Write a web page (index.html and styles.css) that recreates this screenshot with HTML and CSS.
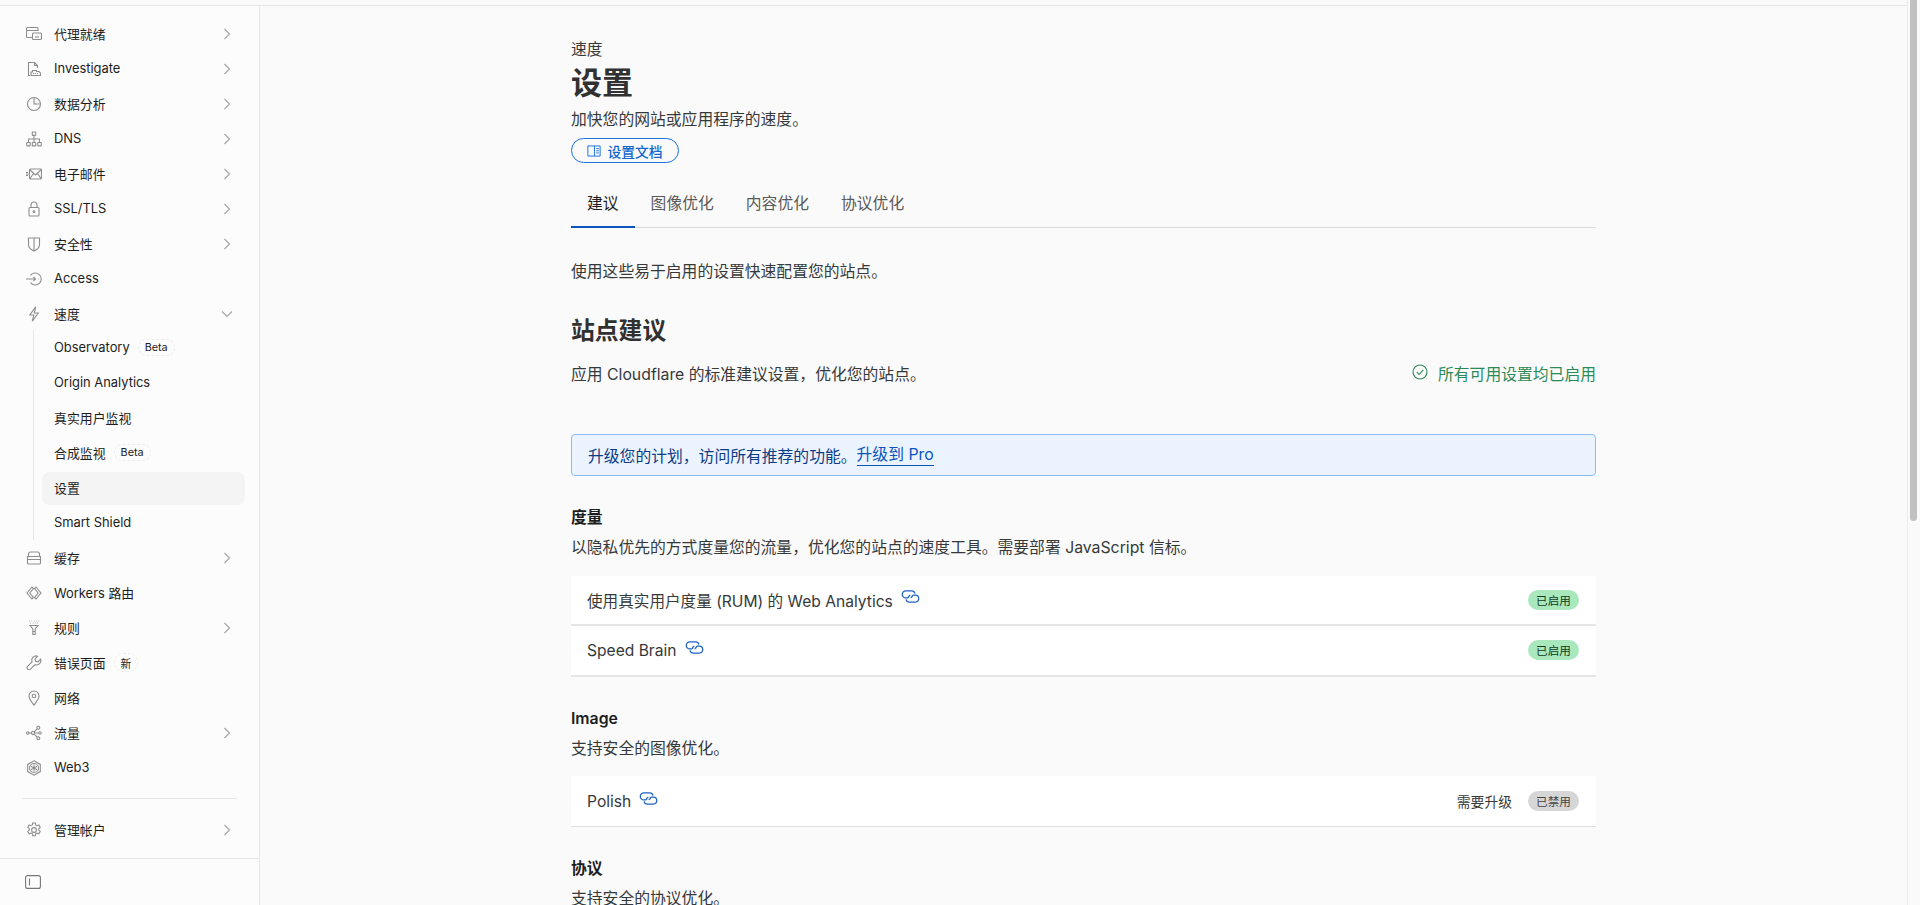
FILE: index.html
```html
<!DOCTYPE html>
<html lang="zh-CN">
<head>
<meta charset="utf-8">
<title>设置</title>
<link rel="stylesheet" href="styles.css">
</head>
<body>
<svg class="sprite" xmlns="http://www.w3.org/2000/svg">
  <symbol id="chev" viewBox="0 0 12 12"><path d="M3.500 1l5 5-5 5"/></symbol>
  <symbol id="chev-d" viewBox="0 0 12 12"><path d="M1 3.500l5 5 5-5"/></symbol>
  <symbol id="i-proxy" viewBox="0 0 16 16"><path d="M6 11.500H1.500a1 1 0 0 1-1-1V2.500a1 1 0 0 1 1-1h9.500a1 1 0 0 1 1 1V5M.5 4.500h11.500"/><rect x="6.500" y="7" width="9" height="6.500" rx="1"/><path d="M9 11h4"/></symbol>
  <symbol id="i-inv" viewBox="0 0 16 16"><path d="M4 14.500H2.500v-13h6l3 3V7M8.500 1.500v3h3"/><path d="M5 14.500v-3.500h1.500v-1.500h4v1h2.500l1.500 1.500v2.500zM7.500 12v1M9.500 12v1M11.500 12v1"/></symbol>
  <symbol id="i-pie" viewBox="0 0 16 16"><circle cx="8" cy="8" r="6.500"/><path d="M8 1.500V8h6.500"/></symbol>
  <symbol id="i-dns" viewBox="0 0 16 16"><rect x="6.300" y="1" width="3.400" height="3.400" rx=".5"/><rect x=".8" y="11.500" width="3.400" height="3.400" rx=".5"/><rect x="6.300" y="11.500" width="3.400" height="3.400" rx=".5"/><rect x="11.800" y="11.500" width="3.400" height="3.400" rx=".5"/><path d="M8 4.400v7.100M2.500 11.500V8h11v3.500"/></symbol>
  <symbol id="i-mail" viewBox="0 0 16 16"><rect x="3.500" y="3" width="12" height="10" rx="1"/><path d="M3.500 3.500L9.500 9l6-5.500M3.800 12.700L7.500 7.500M15.200 12.700L11.500 7.500M0 6.500h2M0 8h2.500M0 9.500h2"/></symbol>
  <symbol id="i-lock" viewBox="0 0 16 16"><rect x="3" y="6.500" width="10" height="8.500" rx="1"/><path d="M5 6.500V4a3 3 0 0 1 6 0v2.500"/><circle cx="8" cy="10.700" r=".9"/></symbol>
  <symbol id="i-shield" viewBox="0 0 16 16"><path d="M2.500 2h11v6.500c0 3-3 5.500-5.500 6.500-2.500-1-5.500-3.500-5.500-6.500zM8 2v13"/></symbol>
  <symbol id="i-access" viewBox="0 0 16 16"><path d="M4.500 4.300a6 6 0 1 1 0 7.400M0 8h9.500M7.500 6l2 2-2 2M12 8h.5"/></symbol>
  <symbol id="i-bolt" viewBox="0 0 16 16"><path d="M9.700.8L3.800 9h4l-1.500 6.200L12.200 7H8.300z"/></symbol>
  <symbol id="i-cache" viewBox="0 0 16 16"><path d="M2.500 6.500V4a2 2 0 0 1 2-2h7a2 2 0 0 1 2 2v2.500M1.500 6.500h13v3h-13zM1.500 9.500h13v3.500a1 1 0 0 1-1 1h-11a1 1 0 0 1-1-1z"/></symbol>
  <symbol id="i-workers" viewBox="0 0 16 16"><path d="M6 2L1 8l5 6 1.500-1.500L3.800 8l3.700-4.500zM10 2l5 6-5 6-1.500-1.500L12.200 8 8.500 3.500z"/></symbol>
  <symbol id="i-rules" viewBox="0 0 16 16"><path d="M4 5.500h8L9.200 9v5.500H6.800V9zM6.800 11.500h2.400"/><path d="M3 1h.6M5.500 1h.6M8 1h.6M10.500 1h.6M12.600 1h.6M4.200 3h.6M6.800 3h.6M9 3h.6M11.300 3h.6"/></symbol>
  <symbol id="i-wrench" viewBox="0 0 16 16"><path d="M14.600 4.200L12 6.800l-2.400-.6-.6-2.400 2.600-2.600A4.300 4.300 0 0 0 6.100 6.800L1.600 11.300a2 2 0 0 0 2.900 2.900L9.100 9.700A4.300 4.300 0 0 0 14.600 4.200z"/></symbol>
  <symbol id="i-pin" viewBox="0 0 16 16"><path d="M8 15.200C5.500 11.700 3 9.200 3 6a5 5 0 0 1 10 0c0 3.200-2.500 5.700-5 9.200z"/><circle cx="8" cy="6" r="1.800"/></symbol>
  <symbol id="i-traffic" viewBox="0 0 16 16"><circle cx="1.800" cy="8" r="1.200"/><circle cx="7" cy="8" r="1.600"/><circle cx="12.300" cy="2.800" r="1.500"/><circle cx="14" cy="8" r="1.200"/><circle cx="12.300" cy="13.200" r="1.500"/><path d="M3 8h2.400M8.200 6.900l3-3M8.200 9.100l3 3M8.600 8h4.200"/></symbol>
  <symbol id="i-web3" viewBox="0 0 16 16"><path d="M8 .8l6.300 3.600v7.200L8 15.200 1.700 11.600V4.400z"/><circle cx="8" cy="8" r="4.500"/><path d="M8 4.500v7M5 6.200l6 3.600M11 6.200L5 9.800"/></symbol>
  <symbol id="i-gear" viewBox="0 0 16 16"><circle cx="8" cy="8" r="2.400"/><path d="M6.700 1h2.600l.4 2 1.300.7 1.900-.7 1.300 2.300-1.500 1.300v1.500l1.500 1.300-1.300 2.300-1.900-.7-1.300.7-.4 2H6.700l-.4-2-1.300-.7-1.900.7-1.300-2.300 1.500-1.300V6.600L1.800 5.300l1.300-2.300 1.900.7 1.300-.7z"/></symbol>
  <symbol id="i-toggle" viewBox="0 0 16 16"><rect x=".6" y="1.600" width="14.800" height="12.800" rx="2"/><path d="M4.500 4.500v7"/></symbol>
  <symbol id="i-book" viewBox="0 0 16 16"><path d="M1 2.200h14v11.600H1zM8.500 2.200v11.600M10.500 5.200h3M10.500 7.700h3M10.500 10.200h3"/></symbol>
  <symbol id="i-check" viewBox="0 0 16 16"><circle cx="8" cy="8" r="7"/><path d="M4.800 8.200l2.300 2.300 4.200-4.700"/></symbol>
  <symbol id="i-link" viewBox="0 0 18 12"><path d="M7 7.300H4.500a3.300 3.300 0 0 1 0-6.600h5.500a3.300 3.300 0 0 1 3.200 2.600"/><path d="M11 4.700h2.500a3.300 3.300 0 0 1 0 6.600H8a3.300 3.300 0 0 1-3.200-2.600"/><path d="M7 7.300a3 3 0 0 1 1.800-2.600M11 4.700a3 3 0 0 1-1.800 2.600"/></symbol>
</svg>

<div class="topline"></div>
<div class="layout">
  <aside class="sidebar">
    <nav class="nav">
      <a class="nav-item"><svg class="ico"><use href="#i-proxy"/></svg><span>代理就绪</span><svg class="chev"><use href="#chev"/></svg></a>
      <a class="nav-item"><svg class="ico"><use href="#i-inv"/></svg><span>Investigate</span><svg class="chev"><use href="#chev"/></svg></a>
      <a class="nav-item"><svg class="ico"><use href="#i-pie"/></svg><span>数据分析</span><svg class="chev"><use href="#chev"/></svg></a>
      <a class="nav-item"><svg class="ico"><use href="#i-dns"/></svg><span>DNS</span><svg class="chev"><use href="#chev"/></svg></a>
      <a class="nav-item"><svg class="ico"><use href="#i-mail"/></svg><span>电子邮件</span><svg class="chev"><use href="#chev"/></svg></a>
      <a class="nav-item"><svg class="ico"><use href="#i-lock"/></svg><span>SSL/TLS</span><svg class="chev"><use href="#chev"/></svg></a>
      <a class="nav-item"><svg class="ico"><use href="#i-shield"/></svg><span>安全性</span><svg class="chev"><use href="#chev"/></svg></a>
      <a class="nav-item"><svg class="ico"><use href="#i-access"/></svg><span>Access</span></a>
      <a class="nav-item"><svg class="ico"><use href="#i-bolt"/></svg><span>速度</span><svg class="chev"><use href="#chev-d"/></svg></a>
      <div class="subnav">
        <a class="sub-item"><span>Observatory</span><span class="tag">Beta</span></a>
        <a class="sub-item"><span>Origin Analytics</span></a>
        <a class="sub-item"><span>真实用户监视</span></a>
        <a class="sub-item"><span>合成监视</span><span class="tag">Beta</span></a>
        <a class="sub-item active"><span>设置</span></a>
        <a class="sub-item"><span>Smart Shield</span></a>
      </div>
      <a class="nav-item"><svg class="ico"><use href="#i-cache"/></svg><span>缓存</span><svg class="chev"><use href="#chev"/></svg></a>
      <a class="nav-item"><svg class="ico"><use href="#i-workers"/></svg><span>Workers 路由</span></a>
      <a class="nav-item"><svg class="ico"><use href="#i-rules"/></svg><span>规则</span><svg class="chev"><use href="#chev"/></svg></a>
      <a class="nav-item"><svg class="ico"><use href="#i-wrench"/></svg><span>错误页面</span><span class="tag">新</span></a>
      <a class="nav-item"><svg class="ico"><use href="#i-pin"/></svg><span>网络</span></a>
      <a class="nav-item"><svg class="ico"><use href="#i-traffic"/></svg><span>流量</span><svg class="chev"><use href="#chev"/></svg></a>
      <a class="nav-item"><svg class="ico"><use href="#i-web3"/></svg><span>Web3</span></a>
      <div class="nav-divider"></div>
      <a class="nav-item"><svg class="ico"><use href="#i-gear"/></svg><span>管理帐户</span><svg class="chev"><use href="#chev"/></svg></a>
    </nav>
    <div class="side-foot"><svg class="ico"><use href="#i-toggle"/></svg></div>
  </aside>

  <main class="main">
    <div class="content">
      <div class="eyebrow">速度</div>
      <h1 class="title">设置</h1>
      <p class="lead">加快您的网站或应用程序的速度。</p>
      <a class="doc-btn"><svg class="book"><use href="#i-book"/></svg>设置文档</a>
      <div class="tabs">
        <a class="tab active">建议</a>
        <a class="tab">图像优化</a>
        <a class="tab">内容优化</a>
        <a class="tab">协议优化</a>
      </div>
      <p class="intro">使用这些易于启用的设置快速配置您的站点。</p>
      <h2 class="h2">站点建议</h2>
      <div class="status-row">
        <span>应用 Cloudflare 的标准建议设置，优化您的站点。</span>
        <span class="status"><svg class="check"><use href="#i-check"/></svg>所有可用设置均已启用</span>
      </div>
      <div class="alert">升级您的计划，访问所有推荐的功能。<a class="alert-link">升级到 Pro</a></div>

      <h3 class="sec">度量</h3>
      <p class="sec-desc">以隐私优先的方式度量您的流量，优化您的站点的速度工具。需要部署 JavaScript 信标。</p>
      <div class="card">
        <div class="row thick"><span>使用真实用户度量 (RUM) 的 Web Analytics</span><svg class="link"><use href="#i-link"/></svg><span class="pill on">已启用</span></div>
        <div class="row thick"><span>Speed Brain</span><svg class="link"><use href="#i-link"/></svg><span class="pill on">已启用</span></div>
      </div>

      <h3 class="sec">Image</h3>
      <p class="sec-desc">支持安全的图像优化。</p>
      <div class="card">
        <div class="row"><span>Polish</span><svg class="link"><use href="#i-link"/></svg><span class="need">需要升级</span><span class="pill off">已禁用</span></div>
      </div>

      <h3 class="sec">协议</h3>
      <p class="sec-desc">支持安全的协议优化。</p>
    </div>
  </main>

  <div class="scrollbar"><div class="thumb"></div></div>
</div>
</body>
</html>
```

FILE: styles.css
```css
* { box-sizing: border-box; }
html, body { margin: 0; height: 100%; }
body {
  height: 905px;
  overflow: hidden;
  display: flex;
  flex-direction: column;
  background: #fafafa;
  color: #36393a;
  font-family: Inter, "Noto Sans CJK SC", sans-serif;
  font-size: 15.8px;
}
.sprite { display: none; }
p, h1, h2, h3 { margin: 0; }

.topline { height: 6px; flex: none; border-bottom: 1px solid #e6e6e6; }
.layout { flex: 1; display: flex; min-height: 0; }

/* Sidebar */
.sidebar {
  width: 260px;
  flex: none;
  display: flex;
  flex-direction: column;
  border-right: 1px solid #e6e6e6;
  background: #fcfcfc;
  color: #1d1d1d;
  font-size: 12.9px;
}
.nav { flex: 1; padding-top: 10px; }
.nav-item {
  height: 35px;
  display: flex;
  align-items: center;
  padding: 0 26px;
  gap: 12px;
}
.ico {
  width: 16px;
  height: 16px;
  flex: none;
  fill: none;
  stroke: #8d8d8d;
  stroke-width: 1.1;
}
.chev {
  width: 12px;
  height: 12px;
  margin-left: auto;
  fill: none;
  stroke: #a3a3a3;
  stroke-width: 1.1;
}
.subnav {
  margin: -1px 14px 0 33px;
  padding-left: 8px;
  border-left: 1px solid #e6e6e6;
}
.sub-item {
  height: 35px;
  display: flex;
  align-items: center;
  padding-left: 12px;
  gap: 8px;
}
.sub-item.active {
  height: 33.5px;
  margin-top: 1.5px;
  padding-bottom: 2px;
  background: #f4f4f4;
  border-radius: 8px;
}
.tag {
  height: 17px;
  padding: 0 6px;
  display: inline-flex;
  align-items: center;
  font-size: 10.8px;
  border: 1px dashed #ececec;
  border-radius: 9px;
}
.nav-item .tag { margin-left: -4px; height: 19px; }
.nav-divider { height: 1px; margin: 13px 22px 13px; background: #e6e6e6; }
.side-foot {
  height: 47px;
  flex: none;
  display: flex;
  align-items: center;
  padding-left: 25px;
  border-top: 1px solid #e6e6e6;
}
.side-foot .ico { stroke: #777; }

/* Main */
.main { flex: 1; min-width: 0; display: flex; justify-content: center; overflow: hidden; }
.content { width: 1025px; flex: none; padding-top: 33px; }
.eyebrow { line-height: 22px; }
.title { font-size: 31px; line-height: 44px; font-weight: 700; color: #313131; }
.lead { margin-top: 4px; line-height: 22px; }
.doc-btn {
  margin-top: 7px;
  width: 108px;
  height: 25px;
  display: flex;
  align-items: center;
  justify-content: center;
  gap: 6px;
  font-size: 13.8px;
  font-weight: 500;
  color: #1268d2;
  border: 1px solid #1a73e0;
  border-radius: 13px;
}
.book { width: 14px; height: 14px; fill: none; stroke: #1a73e0; stroke-width: 1.1; }
.tabs { margin-top: 15px; height: 50px; display: flex; border-bottom: 1px solid #dcdcdc; }
.tab {
  height: 50px;
  padding: 0 16px 2px;
  display: flex;
  align-items: center;
  color: #5a5a5a;
}
.tab.active { color: #1d1d1d; padding-bottom: 0; border-bottom: 2px solid #0a55bd; }
.intro { margin-top: 32px; line-height: 24px; }
.h2 { margin-top: 30px; font-size: 23.8px; line-height: 34px; font-weight: 600; color: #313131; }
.status-row { margin-top: 15px; line-height: 24px; display: flex; justify-content: space-between; }
.status { display: flex; align-items: center; gap: 10px; color: #2b8a57; }
.check { width: 16px; height: 16px; fill: none; stroke: #2b8a57; stroke-width: 1.1; margin-top: -6px; }
.alert {
  margin-top: 47px;
  height: 42px;
  padding: 0 16px;
  display: flex;
  align-items: center;
  background: #ebf3fe;
  border: 1px solid #8dbcf5;
  border-radius: 4px;
  color: #0c3c85;
}
.alert-link { color: #0a55bd; border-bottom: 1px solid #0a55bd; line-height: 20px; }
.sec { margin-top: 31px; line-height: 22px; font-size: 15.8px; font-weight: 600; color: #1d1d1d; }
.sec-desc { margin-top: 8px; line-height: 22px; }
.card { margin-top: 16.5px; background: #fff; font-size: 15.6px; }
.row {
  height: 51px;
  padding: 0 17px 0 16px;
  display: flex;
  align-items: center;
  border-bottom: 1px solid #dedede;
}
.row.thick { height: 50.5px; border-bottom: 2px solid #e6e6e6; }
.link { width: 19px; height: 13px; margin: -6px 0 0 8px; fill: none; stroke: #1d63c4; stroke-width: 1.2; }
.need { margin-left: auto; font-size: 13.8px; }
.pill {
  width: 51px;
  height: 20px;
  display: flex;
  align-items: center;
  justify-content: center;
  font-size: 11.6px;
  border-radius: 10px;
}
.pill.on { margin-left: auto; background: #a9e7bd; color: #123c22; }
.pill.off { margin-left: 16px; background: #d6d6d6; color: #444; }

/* Scrollbar */
.scrollbar { width: 13px; flex: none; margin-top: -6px; border-left: 1px solid #ececec; padding-left: 2px; background: #fafafa; }
.thumb { width: 7px; height: 521px; background: #c1c1c1; border-radius: 0 0 4px 4px; }
```
